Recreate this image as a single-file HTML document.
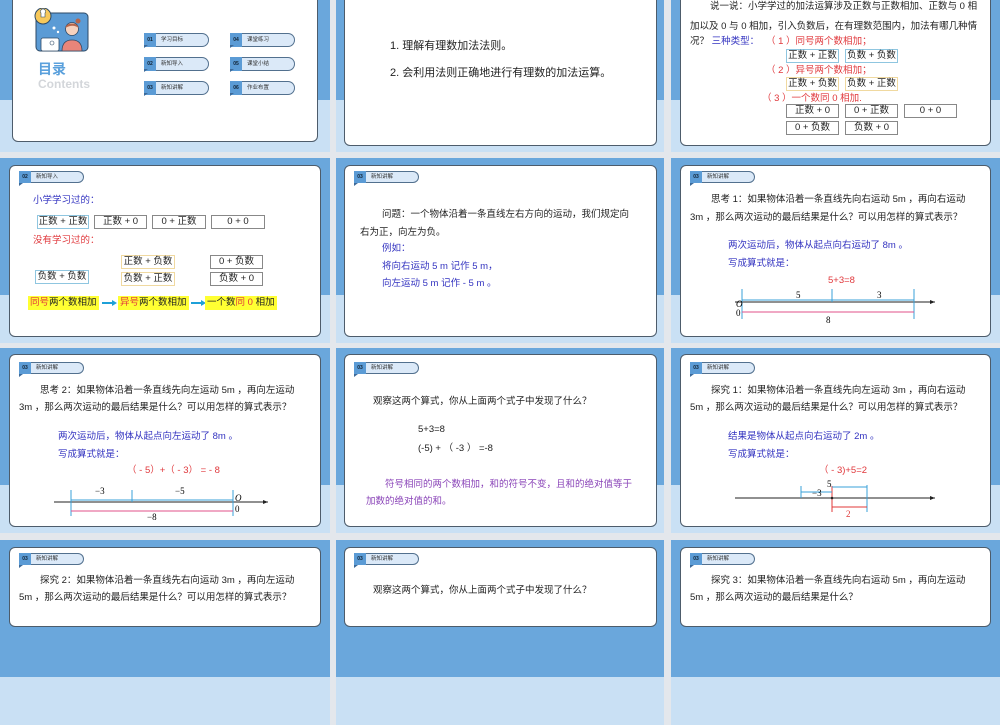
<!DOCTYPE html>
<html><head><meta charset="utf-8"><style>
*{margin:0;padding:0;box-sizing:border-box}
body{width:1000px;height:600px;overflow:hidden;background:#e3e7ec;position:relative;font-family:"Liberation Sans","Noto Sans CJK SC",sans-serif;color:#222}
.cell{position:absolute;background:linear-gradient(#6aa7dc 0,#6aa7dc 137px,#c9e0f4 137px)}
.card{position:absolute;background:#fff;border:1px solid #4d5c6b;border-radius:6px}
.t{position:absolute;white-space:nowrap;font-size:9.5px;line-height:12px}
.tab{position:absolute;width:65px;height:12px}
.tab .n{position:absolute;left:0;top:0;width:12px;height:12px;background:#5b9bd5;color:#123;font-size:5px;line-height:12px;text-align:center;font-weight:bold}
.tab .n:after{content:"";position:absolute;left:0;top:12px;border-left:4px solid #3d6a99;border-bottom:3px solid transparent}
.tab .l{position:absolute;left:12px;top:0;width:53px;height:12px;background:#dbe9f8;border:1px solid #52708e;border-left:none;border-radius:0 7px 7px 0;font-size:5.5px;line-height:10px;padding-left:5px;color:#333}
.b{color:#3333c0}.r{color:#e0383c}.p{color:#8a44b8}
.bx{position:absolute;font-size:9.5px;line-height:12px;text-align:center;border:1px solid #888;white-space:nowrap}
.bc{border-color:#8fc6e0}.by{border-color:#f0d9a0}
.hl{position:absolute;background:#ffff33;font-size:9.5px;line-height:14px;height:14px;white-space:nowrap;padding:0 2px}
.arr{position:absolute;width:15px;height:6px}
</style></head><body>
<!-- cells -->
<div class="cell" style="left:0;top:-37px;width:330px;height:189px"></div>
<div class="cell" style="left:336px;top:-37px;width:328px;height:189px"></div>
<div class="cell" style="left:671px;top:-37px;width:329px;height:189px"></div>
<div class="cell" style="left:0;top:158px;width:330px;height:185px"></div>
<div class="cell" style="left:336px;top:158px;width:328px;height:185px"></div>
<div class="cell" style="left:671px;top:158px;width:329px;height:185px"></div>
<div class="cell" style="left:0;top:348px;width:330px;height:185px"></div>
<div class="cell" style="left:336px;top:348px;width:328px;height:185px"></div>
<div class="cell" style="left:671px;top:348px;width:329px;height:185px"></div>
<div class="cell" style="left:0;top:540px;width:330px;height:185px"></div>
<div class="cell" style="left:336px;top:540px;width:328px;height:185px"></div>
<div class="cell" style="left:671px;top:540px;width:329px;height:185px"></div>
<!-- cards -->
<div class="card" style="left:12px;top:-30px;width:306px;height:172px"></div>
<div class="card" style="left:344px;top:-30px;width:313px;height:176px"></div>
<div class="card" style="left:680px;top:-30px;width:311px;height:176px"></div>
<div class="card" style="left:9px;top:165px;width:312px;height:172px"></div>
<div class="card" style="left:344px;top:165px;width:313px;height:172px"></div>
<div class="card" style="left:680px;top:165px;width:311px;height:172px"></div>
<div class="card" style="left:9px;top:354px;width:312px;height:173px"></div>
<div class="card" style="left:344px;top:354px;width:313px;height:173px"></div>
<div class="card" style="left:680px;top:354px;width:311px;height:173px"></div>
<div class="card" style="left:9px;top:547px;width:312px;height:80px"></div>
<div class="card" style="left:344px;top:547px;width:313px;height:80px"></div>
<div class="card" style="left:680px;top:547px;width:311px;height:80px"></div>

<!-- r1c1 -->
<svg style="position:absolute;left:32px;top:8px" width="58" height="46" viewBox="0 0 58 46">
<rect x="4" y="5" width="52" height="38" rx="4" fill="#5b9bd5" stroke="#2e4a66" stroke-width="1"/>
<circle cx="11" cy="8" r="8" fill="#f7c85a" stroke="#2e4a66" stroke-width="1"/>
<path d="M9 5a2.5 2.5 0 1 1 4 0v4h-4z" fill="#fff" stroke="#2e4a66" stroke-width=".6"/>
<circle cx="22" cy="20" r="1.5" fill="#fff"/><circle cx="26" cy="24" r="1.2" fill="#fff"/>
<rect x="9" y="30" width="18" height="13" rx="2" fill="#fff" stroke="#2e4a66" stroke-width=".8"/>
<circle cx="20" cy="35" r="2" fill="none" stroke="#2e4a66" stroke-width=".6"/>
<path d="M30 43c0-8 4-11 10-11s10 3 10 11z" fill="#e8857a" stroke="#2e4a66" stroke-width=".8"/>
<circle cx="40" cy="21" r="6.5" fill="#f6d2be" stroke="#2e4a66" stroke-width=".8"/>
<path d="M33.5 20c0-6 13-6 13 0c-3-3-9-3-13 0z" fill="#b5654a"/>
<circle cx="46" cy="13" r="2.5" fill="#b5654a"/>
</svg>
<div class="t" style="left:38px;top:61px;font-size:14px;line-height:16px;font-weight:bold;color:#5aa0dc">目录</div>
<div class="t" style="left:38px;top:78px;font-size:12px;line-height:13px;font-weight:bold;color:#d3d6da">Contents</div>
<div class="tab" style="left:144px;top:33px;height:14px;width:66px"><div class="n" style="height:14px;line-height:14px">01</div><div class="l" style="height:14px;line-height:12px">学习目标</div></div>
<div class="tab" style="left:144px;top:57px;height:14px;width:66px"><div class="n" style="height:14px;line-height:14px">02</div><div class="l" style="height:14px;line-height:12px">新知导入</div></div>
<div class="tab" style="left:144px;top:81px;height:14px;width:66px"><div class="n" style="height:14px;line-height:14px">03</div><div class="l" style="height:14px;line-height:12px">新知讲解</div></div>
<div class="tab" style="left:230px;top:33px;height:14px;width:66px"><div class="n" style="height:14px;line-height:14px">04</div><div class="l" style="height:14px;line-height:12px">课堂练习</div></div>
<div class="tab" style="left:230px;top:57px;height:14px;width:66px"><div class="n" style="height:14px;line-height:14px">05</div><div class="l" style="height:14px;line-height:12px">课堂小结</div></div>
<div class="tab" style="left:230px;top:81px;height:14px;width:66px"><div class="n" style="height:14px;line-height:14px">06</div><div class="l" style="height:14px;line-height:12px">作业布置</div></div>

<!-- r1c2 -->
<div class="t" style="left:390px;top:40px;font-size:11px;line-height:13px">1. 理解有理数加法法则。</div>
<div class="t" style="left:390px;top:67px;font-size:11px;line-height:13px">2. 会利用法则正确地进行有理数的加法运算。</div>

<!-- r1c3 -->
<div class="t" style="left:710px;top:1px">说一说：小学学过的加法运算涉及正数与正数相加、正数与 0 相</div>
<div class="t" style="left:690px;top:21px">加以及 0 与 0 相加，引入负数后，在有理数范围内，加法有哪几种情</div>
<div class="t" style="left:690px;top:36px">况？ <span class="b">三种类型：</span></div>
<div class="t r" style="left:766px;top:36px">（ 1 ）同号两个数相加；</div>
<div class="bx bc" style="left:786px;top:49px;width:53px">正数 + 正数</div>
<div class="bx bc" style="left:845px;top:49px;width:53px">负数 + 负数</div>
<div class="t r" style="left:766px;top:65px">（ 2 ）异号两个数相加；</div>
<div class="bx by" style="left:786px;top:77px;width:53px">正数 + 负数</div>
<div class="bx by" style="left:845px;top:77px;width:53px">负数 + 正数</div>
<div class="t r" style="left:762px;top:93px">（ 3 ）一个数同  0  相加.</div>
<div class="bx" style="left:786px;top:104px;width:53px">正数 + 0</div>
<div class="bx" style="left:845px;top:104px;width:53px">0 + 正数</div>
<div class="bx" style="left:904px;top:104px;width:53px">0 + 0</div>
<div class="bx" style="left:786px;top:121px;width:53px">0 + 负数</div>
<div class="bx" style="left:845px;top:121px;width:53px">负数 + 0</div>

<!-- r2c1 -->
<div class="tab" style="left:19px;top:171px"><div class="n">02</div><div class="l">新知导入</div></div>
<div class="t b" style="left:33px;top:195px">小学学习过的：</div>
<div class="bx bc" style="left:37px;top:215px;width:52px">正数 + 正数</div>
<div class="bx" style="left:94px;top:215px;width:53px">正数 + 0</div>
<div class="bx" style="left:152px;top:215px;width:54px">0 + 正数</div>
<div class="bx" style="left:211px;top:215px;width:54px">0 + 0</div>
<div class="t r" style="left:33px;top:235px">没有学习过的：</div>
<div class="bx by" style="left:121px;top:255px;width:54px">正数 + 负数</div>
<div class="bx by" style="left:121px;top:272px;width:54px">负数 + 正数</div>
<div class="bx" style="left:210px;top:255px;width:53px">0 + 负数</div>
<div class="bx" style="left:210px;top:272px;width:53px">负数 + 0</div>
<div class="bx bc" style="left:35px;top:270px;width:54px">负数 + 负数</div>
<div class="hl" style="left:28px;top:296px"><span class="r">同号</span>两个数相加</div>
<svg class="arr" style="left:102px;top:300px" viewBox="0 0 15 6"><path d="M0 2h10V0l5 3-5 3V4H0z" fill="#1ea0d8"/></svg>
<div class="hl" style="left:118px;top:296px"><span class="r">异号</span>两个数相加</div>
<svg class="arr" style="left:191px;top:300px" viewBox="0 0 15 6"><path d="M0 2h10V0l5 3-5 3V4H0z" fill="#1ea0d8"/></svg>
<div class="hl" style="left:205px;top:296px">一个数<span class="r">同  0</span>  相加</div>

<!-- r2c2 -->
<div class="tab" style="left:354px;top:171px"><div class="n">03</div><div class="l">新知讲解</div></div>
<div class="t" style="left:382px;top:209px">问题：一个物体沿着一条直线左右方向的运动，我们规定向</div>
<div class="t" style="left:360px;top:227px">右为正，向左为负。</div>
<div class="t b" style="left:382px;top:243px">例如：</div>
<div class="t b" style="left:382px;top:261px">将向右运动 5 m 记作 5 m，</div>
<div class="t b" style="left:382px;top:278px">向左运动 5 m 记作 -  5 m 。</div>

<!-- r2c3 -->
<div class="tab" style="left:690px;top:171px"><div class="n">03</div><div class="l">新知讲解</div></div>
<div class="t" style="left:711px;top:194px">思考 1：如果物体沿着一条直线先向右运动 5m ，再向右运动</div>
<div class="t" style="left:690px;top:212px">3m ，那么两次运动的最后结果是什么？可以用怎样的算式表示？</div>
<div class="t b" style="left:728px;top:240px">两次运动后，物体从起点向右运动了 8m 。</div>
<div class="t b" style="left:728px;top:258px">写成算式就是：</div>
<div class="t r" style="left:828px;top:275px">5+3=8</div>
<svg style="position:absolute;left:730px;top:285px" width="210" height="45">
<line x1="5" y1="17" x2="205" y2="17" stroke="#222" stroke-width="1"/><path d="M205 17l-5-2v4z" fill="#222"/>
<line x1="12" y1="4" x2="12" y2="34" stroke="#3aa0d8"/><line x1="102" y1="4" x2="102" y2="17" stroke="#3aa0d8"/><line x1="184" y1="4" x2="184" y2="34" stroke="#3aa0d8"/>
<line x1="12" y1="15" x2="184" y2="15" stroke="#3aa0d8"/><line x1="12" y1="27" x2="184" y2="27" stroke="#e0508a"/>
<text x="66" y="13" font-size="9" font-family="Liberation Serif">5</text><text x="147" y="13" font-size="9" font-family="Liberation Serif">3</text>
<text x="6" y="22" font-size="9" font-style="italic" font-family="Liberation Serif">O</text><text x="6" y="31" font-size="9" font-family="Liberation Serif">0</text>
<text x="96" y="38" font-size="9" font-family="Liberation Serif">8</text></svg>

<!-- r3c1 -->
<div class="tab" style="left:19px;top:362px"><div class="n">03</div><div class="l">新知讲解</div></div>
<div class="t" style="left:40px;top:385px">思考 2：如果物体沿着一条直线先向左运动 5m ，再向左运动</div>
<div class="t" style="left:19px;top:402px">3m ，那么两次运动的最后结果是什么？可以用怎样的算式表示？</div>
<div class="t b" style="left:58px;top:431px">两次运动后，物体从起点向左运动了 8m 。</div>
<div class="t b" style="left:58px;top:449px">写成算式就是：</div>
<div class="t r" style="left:127px;top:465px">（ -  5）+（ -  3） =  -  8</div>
<svg style="position:absolute;left:50px;top:484px" width="225" height="40">
<line x1="4" y1="18" x2="218" y2="18" stroke="#222"/><path d="M218 18l-5-2v4z" fill="#222"/>
<line x1="21" y1="6" x2="21" y2="32" stroke="#3aa0d8"/><line x1="82" y1="6" x2="82" y2="18" stroke="#3aa0d8"/><line x1="183" y1="6" x2="183" y2="32" stroke="#3aa0d8"/>
<line x1="21" y1="16" x2="183" y2="16" stroke="#3aa0d8"/><line x1="21" y1="27" x2="183" y2="27" stroke="#e0508a"/>
<text x="45" y="10" font-size="9" font-family="Liberation Serif">−3</text><text x="125" y="10" font-size="9" font-family="Liberation Serif">−5</text>
<text x="185" y="17" font-size="9" font-style="italic" font-family="Liberation Serif">O</text><text x="185" y="28" font-size="9" font-family="Liberation Serif">0</text>
<text x="97" y="36" font-size="9" font-family="Liberation Serif">−8</text></svg>

<!-- r3c2 -->
<div class="tab" style="left:354px;top:362px"><div class="n">03</div><div class="l">新知讲解</div></div>
<div class="t" style="left:373px;top:396px">观察这两个算式，你从上面两个式子中发现了什么？</div>
<div class="t" style="left:418px;top:424px">5+3=8</div>
<div class="t" style="left:418px;top:443px">(-5) +  （ -3 ） =-8</div>
<div class="t p" style="left:385px;top:479px">符号相同的两个数相加，和的符号不变，且和的绝对值等于</div>
<div class="t p" style="left:366px;top:496px">加数的绝对值的和。</div>

<!-- r3c3 -->
<div class="tab" style="left:690px;top:362px"><div class="n">03</div><div class="l">新知讲解</div></div>
<div class="t" style="left:711px;top:385px">探究 1：如果物体沿着一条直线先向左运动 3m ，再向右运动</div>
<div class="t" style="left:690px;top:402px">5m ，那么两次运动的最后结果是什么？可以用怎样的算式表示？</div>
<div class="t b" style="left:728px;top:431px">结果是物体从起点向右运动了 2m 。</div>
<div class="t b" style="left:728px;top:449px">写成算式就是：</div>
<div class="t r" style="left:819px;top:465px">（ -  3)+5=2</div>
<svg style="position:absolute;left:730px;top:480px" width="210" height="40">
<line x1="5" y1="18" x2="205" y2="18" stroke="#222"/><path d="M205 18l-5-2v4z" fill="#222"/>
<line x1="71" y1="6" x2="71" y2="18" stroke="#3aa0d8"/><line x1="102" y1="6" x2="102" y2="32" stroke="#e03838"/><line x1="137" y1="5" x2="137" y2="32" stroke="#3aa0d8"/>
<line x1="102" y1="7" x2="137" y2="7" stroke="#3aa0d8"/><line x1="71" y1="12" x2="102" y2="12" stroke="#3aa0d8"/>
<line x1="102" y1="27" x2="137" y2="27" stroke="#e03838"/><circle cx="102" cy="18" r="1.3" fill="#222"/>
<text x="97" y="7" font-size="9" font-family="Liberation Serif">5</text><text x="82" y="16" font-size="9" font-family="Liberation Serif">−3</text>
<text x="116" y="37" font-size="9" fill="#e03838" font-family="Liberation Serif">2</text></svg>

<!-- r4 -->
<div class="tab" style="left:19px;top:553px"><div class="n">03</div><div class="l">新知讲解</div></div>
<div class="t" style="left:40px;top:575px">探究 2：如果物体沿着一条直线先右向运动 3m ，再向左运动</div>
<div class="t" style="left:19px;top:592px">5m ，那么两次运动的最后结果是什么？可以用怎样的算式表示？</div>
<div class="tab" style="left:354px;top:553px"><div class="n">03</div><div class="l">新知讲解</div></div>
<div class="t" style="left:373px;top:585px">观察这两个算式，你从上面两个式子中发现了什么？</div>
<div class="tab" style="left:690px;top:553px"><div class="n">03</div><div class="l">新知讲解</div></div>
<div class="t" style="left:711px;top:575px">探究 3：如果物体沿着一条直线先向右运动 5m ，再向左运动</div>
<div class="t" style="left:690px;top:592px">5m ，那么两次运动的最后结果是什么？</div>
</body></html>
